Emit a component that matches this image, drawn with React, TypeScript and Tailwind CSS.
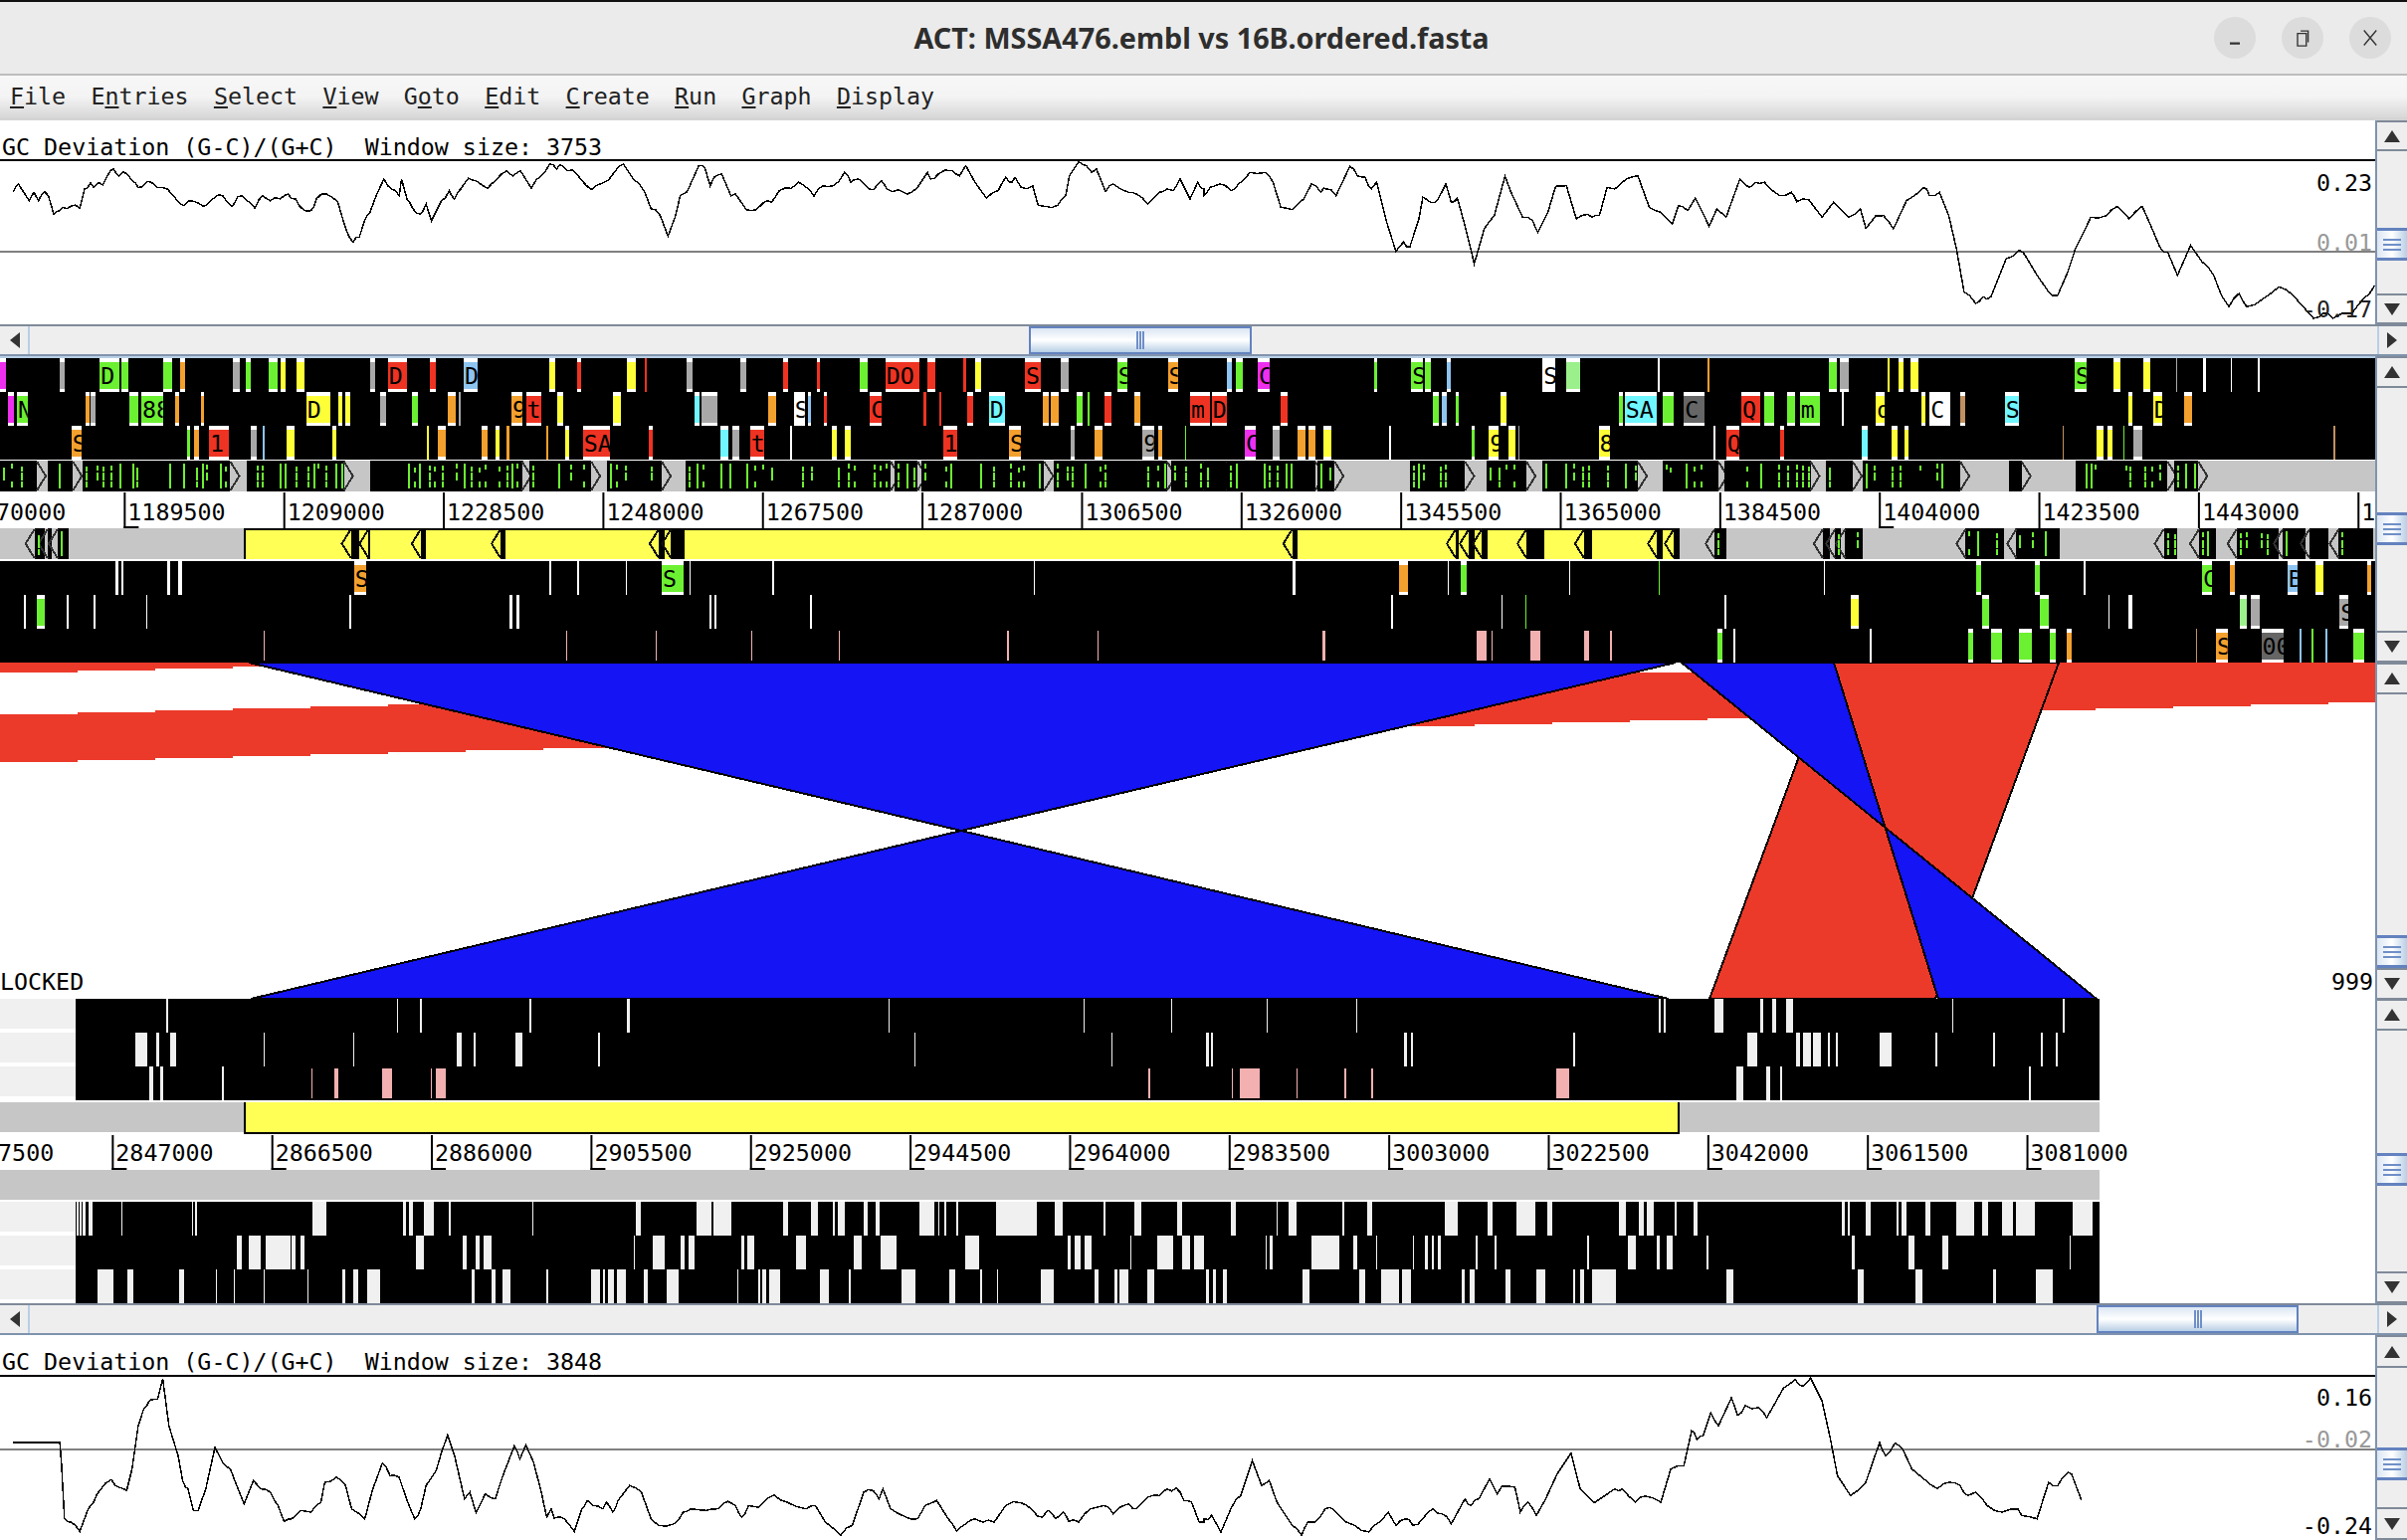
import { FC } from "react";

const COLORS: Record<string, string> = {
  m: "#ee2fee",
  w: "#ffffff",
  g: "#6cf032",
  l: "#9cf08c",
  o: "#f2a02e",
  y: "#ffff38",
  r: "#ee3322",
  b: "#8ec4f0",
  c: "#70f6ff",
  a: "#a8a8a8",
  d: "#666666",
  t: "#c09060",
  p: "#f2b0b0",
  f: "#f0f0f0",
};

// spans are measured in the two half-width crops: x / 1.296, right half + 1210
type Span = { x: number; w: number; c: string; label?: string };

const parse = (s: string, off: number): Span[] =>
  s
    .trim()
    .split(/\s+/)
    .filter(Boolean)
    .map((tok) => {
      const [range, label] = tok.split(":");
      const c = range.slice(-1);
      const [a, b] = range.slice(0, -1).split("-").map(Number);
      return { x: off + a / 1.296, w: Math.max((b - a) / 1.296, 1.5), c, label };
    });

const spans = (left: string, right: string) => [...parse(left, 0), ...parse(right, 1210)];

const top1 = spans(
  "0-8m 78-84a 130-155g:D 158-167g 212-224g 235-241o 303-312a 320-326g 350-362g 365-372y 386-397y 482-488a 505-530r:D 560-568r 604-622b:D 715-723y 752-757r 816-828y 840-843r 894-902a 964-972a 1020-1026r 1064-1068r 1120-1130g 1153-1198r:DO 1208-1218r 1255-1258r 1270-1278y 1335-1355r:S 1381-1392a 1455-1468g:S 1521-1534o:S",
  "30-36b 42-50g 70-85m:C 222-226g 270-285g:S 288-296g 316-322b 441-458w:S 472-490l 591-594w 656-659o 814-824g 828-840a 890-893y 905-911y 920-931y 1134-1149g:S 1185-1193y 1224-1232y 1266-1268a 1301-1305w 1337-1339w 1372-1375w",
);
const top2 = spans(
  "10-18m 22-36g:N 112-116o 118-124a 168-180g 184-212g:88 228-233o 262-266o 399-430y:D 440-446y 450-456y 495-503a 536-544g 583-594o 597-600a 666-680o:9 685-705r:t 726-733y 798-809y 905-911c 914-934a 1000-1011o 1034-1048w:S 1052-1056b 1073-1077r 1133-1148r:C 1203-1206r 1223-1226r 1260-1267r 1288-1309c:D 1358-1366o 1369-1379o 1402-1410g 1416-1419g 1438-1448r 1477-1485o 1550-1568r:m",
  "0-8r 10-30r:D 100-109r 298-306g 310-316b 328-332g 386-394y 540-545g 548-590c:SA 598-612g 625-652d:C 700-724r:Q 730-742g 760-770g 776-802g:m 831-833w 875-887y:d 935-940y 945-972w:C 985-991t 1043-1061c:S 1204-1209y 1236-1248y:D 1276-1287o",
);
const top3 = spans(
  "93-106o:S 244-248g 253-259o 272-298r:1 327-335a 342-345b 373-384y 433-438y 556-558y 570-581o 627-635o 645-650y 660-663o 711-714o 736-741y 759-795r:SA 845-850r 938-949c 954-963a 977-995r:t 1029-1031w 1083-1090y 1100-1108y 1228-1247r:1 1314-1330o:S 1395-1400a 1425-1436o 1488-1503a:9 1508-1514o 1543-1545g",
  "53-68m:C 90-99a 122-132o 136-145o 155-166y 241-243w 348-353g 371-384y:9 397-405y 409-411a 514-529y:8 664-666w 680-697r:Q 750-755r 857-865c 895-903y 912-917y 1118-1120t 1162-1172y 1177-1183y 1197-1199g 1211-1222a 1471-1473t",
);
const low1 = spans(
  "150-154w 158-161w 218-222w 232-237w 461-477o:S 716-718w 752-754w 815-817w 862-890g:S 898-899w 1006-1008w 1346-1348w",
  "115-119w 254-266o 317-319w 334-342g 475-477w 592-594g 807-809w 1006-1012g 1082-1089g 1146-1148w 1300-1313g:C 1336-1343o 1411-1424b:B 1448-1458y 1515-1520o",
);
const low2 = spans(
  "31-34w 48-58g 87-89w 122-124w 190-192w 455-457w 664-667w 672-676w 924-927w 930-933w 1055-1057w",
  "244-246w 387-389w 418-420g 678-680w 843-853y 1014-1022g 1089-1100g 1178-1180w 1204-1209w 1349-1358l 1364-1375a 1479-1491a:S",
);
const low3 = spans(
  "343-345p 737-739p 854-856p 978-980p 1092-1094p 1312-1314p 1429-1431p",
  "154-158p 355-368p 374-376p 425-438p 495-501p 529-532p 669-675g 690-692w 867-869w 995-1002g 1025-1040g 1062-1078g 1102-1110g 1123-1130o 1292-1294t 1318-1333o:S 1377-1406d:00 1427-1430b 1442-1445g 1460-1463b 1497-1511g",
);

const bot1 = spans(
  "216-219f 517-518f 547-548f 690-691f 817-821f 1157-1158f 1411-1412f 1525-1526f",
  "81-82f 198-199f 592-595f 599-601f 665-676f 725-728f 740-745f 758-767f 974-975f 1119-1120f",
);
const bot2 = spans(
  "176-192f 203-207f 222-230f 343-344f 460-461f 595-601f 617-618f 671-681f 779-782f 1191-1192f 1447-1448f",
  "3-6f 9-12f 260-264f 270-271f 481-482f 708-720f 771-776f 780-790f 793-804f 813-815f 823-826f 880-896f 953-954f 1028-1029f 1090-1092f 1109-1112f",
);
const bot3 = spans(
  "195-199f 209-212f 289-292f 405-407p 436-441p 498-511p 561-562p 568-581p 1496-1497p",
  "36-38p 47-73p 120-121p 183-184p 218-219p 459-475p 694-702f 732-738f 750-753f 1075-1076f",
);
const bot4 = spans(
  "100-102f 104-106f 108-111f 115-120f 158-160f 250-251f 254-256f 407-425f 525-529f 533-538f 552-565f 584-587f 693-694f 828-834f 907-926f 929-953f 1020-1026f 1056-1065f 1085-1087f 1091-1100f 1125-1130f 1140-1146f 1197-1217f 1222-1224f 1230-1233f 1246-1247f 1297-1305f 1305-1350f 1374-1384f 1437-1440f 1478-1486f 1533-1540f",
  "35-42f 94-96f 110-121f 180-183f 212-219f 314-331f 369-376f 407-431f 447-453f 540-549f 566-573f 577-586f 613-616f 638-643f 831-834f 838-841f 862-868f 902-904f 908-915f 940-946f 980-1003f 1014-1021f 1040-1054f 1058-1082f 1131-1157f",
);
const bot5 = spans(
  "308-315f 324-340f 346-378f 380-385f 392-396f 542-552f 603-608f 620-625f 630-640f 825-827f 850-866f 886-892f 897-905f 965-970f 973-982f 1037-1050f 1112-1122f 1147-1168f 1257-1275f 1390-1395f 1400-1408f 1412-1422f 1472-1474f 1507-1528f 1540-1550f 1555-1568f",
  "80-82f 86-90f 140-176f 195-200f 224-226f 272-274f 288-292f 297-300f 304-308f 354-356f 378-381f 499-502f 552-562f 590-594f 603-610f 655-656f 844-848f 918-925f 962-969f 1127-1128f",
);
const bot6 = spans(
  "127-148f 166-174f 233-240f 281-283f 304-306f 343-344f 400-402f 446-450f 460-467f 478-495f 614-618f 640-645f 654-665f 711-714f 770-782f 785-788f 792-800f 804-815f 838-844f 868-884f 960-961f 987-990f 993-998f 1002-1016f 1068-1079f 1105-1108f 1174-1192f 1237-1244f 1277-1279f 1298-1300f 1355-1372f 1426-1431f 1452-1455f 1458-1470f 1494-1503f",
  "3-7f 12-16f 25-30f 128-137f 202-210f 231-254f 258-270f 336-339f 346-352f 393-399f 433-444f 481-484f 490-495f 506-537f 681-690f 852-859f 927-936f 1028-1031f 1084-1105f",
);

// gray strips: black blocks holding green codon marks
const forwardBlocks = spans(
  "0-48d 62-95d 108-300d 322-448d 482-680d 690-770d 790-862d 893-1160d 1165-1195d 1200-1360d 1372-1520d 1525-1568d",
  "0-30d 30-145d 148-170d 268-340d 368-420d 441-565d 597-670d 678-790d 810-845d 858-985d 1048-1065d 1135-1255d 1264-1295d",
);
const reverseBlocks = spans(
  "45-58d 62-68d 75-90d",
  "665-680d 806-815d 822-830d 835-858d 992-1042d 1058-1115d 1250-1268d 1296-1318d 1345-1400d 1405-1435d 1440-1465d 1478-1523d",
);
const yellowBlocks = spans(
  "457-468d 480-482d 548-555d 652-658d 858-866d 874-892d",
  "115-122d 328-332d 345-352d 362-370d 420-443d 495-505d 590-598d 612-620d",
);

const topGraph = [
  [17,580],[24,555],[38,605],[44,580],[50,605],[58,578],[63,590],[70,645],[78,635],[85,628],[92,622],[98,618],[104,628],[110,570],[118,552],[122,565],[128,550],[134,558],[140,530],[148,510],[155,530],[160,518],[172,545],[180,565],[188,555],[195,548],[205,565],[218,570],[226,590],[232,608],[240,620],[246,605],[258,612],[265,622],[272,612],[280,595],[290,590],[302,622],[310,592],[322,605],[332,628],[342,590],[352,605],[365,600],[375,585],[385,600],[395,632],[405,635],[412,600],[425,585],[440,608],[445,650],[452,700],[460,730],[468,715],[475,665],[482,640],[490,590],[500,540],[510,570],[520,590],[523,540],[530,600],[538,630],[548,645],[555,615],[562,665],[575,605],[585,575],[592,600],[600,570],[610,538],[620,545],[635,568],[645,545],[660,515],[668,530],[678,515],[692,568],[705,530],[716,495],[725,510],[733,500],[740,515],[746,512],[758,545],[770,572],[785,552],[800,520],[812,495],[825,540],[840,580],[848,630],[860,650],[870,712],[880,650],[886,590],[895,578],[910,500],[918,505],[925,560],[930,535],[940,525],[952,590],[958,585],[972,632],[985,632],[995,610],[1005,610],[1015,575],[1030,568],[1040,550],[1050,565],[1060,592],[1072,560],[1085,560],[1100,520],[1108,550],[1118,540],[1128,560],[1138,572],[1148,545],[1155,570],[1170,572],[1182,585],[1195,565],[1208,520],[1212,540],[1222,525],[1240,515],[1250,530],[1258,500],[1270,550],[1285,598],[1300,575],[1310,535],[1315,550],[1322,535],[1330,565],[1345,560],[1352,618],[1362,622],[1378,618],[1388,590],[1393,530],[1405,488],[1415,500],[1422,520],[1428,510],[1440,578],[1450,555],[1470,580],[1480,585],[1495,615],[1510,580],[1520,570],[1528,575],[1537,540],[1550,600],[1560,550],[1568,570],
];
const topGraphRight = [
  [0,590],[8,565],[20,555],[35,575],[45,555],[60,520],[80,520],[90,550],[100,625],[115,632],[130,600],[140,555],[152,580],[160,570],[172,590],[190,502],[200,530],[210,535],[218,570],[225,550],[238,670],[250,758],[260,730],[268,745],[280,660],[285,595],[295,610],[305,600],[315,555],[322,610],[330,598],[340,680],[352,795],[365,690],[378,650],[392,532],[400,580],[415,655],[428,665],[435,700],[448,640],[458,562],[472,560],[485,660],[495,648],[505,655],[515,650],[525,565],[535,570],[550,540],[565,530],[580,625],[595,640],[610,675],[618,620],[630,635],[640,597],[658,682],[668,630],[680,655],[698,540],[710,565],[718,550],[730,550],[750,590],[765,580],[772,608],[788,603],[805,655],[820,610],[840,655],[855,630],[862,688],[875,650],[885,650],[898,690],[915,605],[938,565],[945,590],[958,580],[970,650],[980,750],[990,880],[1005,915],[1015,895],[1025,895],[1045,780],[1062,755],[1072,780],[1085,830],[1100,880],[1112,890],[1125,820],[1135,750],[1150,680],[1155,655],[1175,650],[1190,622],[1205,660],[1222,622],[1235,690],[1245,745],[1255,760],[1268,830],[1285,740],[1300,790],[1315,830],[1325,890],[1335,925],[1348,885],[1358,925],[1380,900],[1400,865],[1420,895],[1445,960],[1458,945],[1470,960],[1495,945],[1510,900],[1525,860],
];
const bottomGraph = [
  [78,452],[80,510],[84,680],[92,690],[104,718],[115,650],[122,630],[130,595],[145,562],[155,585],[165,595],[172,530],[180,400],[187,350],[195,322],[205,320],[212,258],[220,400],[232,490],[238,565],[245,590],[252,655],[258,655],[268,590],[280,465],[290,510],[300,530],[310,590],[318,635],[330,565],[340,590],[352,600],[362,640],[370,688],[380,680],[392,655],[405,660],[418,630],[423,570],[438,555],[450,580],[458,650],[468,665],[475,682],[485,595],[498,512],[508,550],[520,555],[530,625],[540,680],[548,650],[555,580],[568,535],[575,480],[583,428],[592,490],[605,620],[612,600],[620,662],[632,605],[645,620],[655,550],[670,460],[677,500],[685,458],[695,510],[705,600],[712,675],[718,650],[722,678],[735,680],[748,718],[758,650],[765,625],[772,640],[785,650],[790,630],[798,660],[805,625],[820,580],[835,598],[848,680],[858,700],[878,695],[890,660],[900,650],[920,655],[935,650],[948,628],[958,640],[966,675],[975,640],[988,645],[1008,608],[1025,630],[1050,650],[1062,640],[1075,690],[1095,730],[1110,700],[1125,600],[1137,595],[1145,620],[1150,590],[1160,650],[1180,675],[1195,680],[1205,640],[1220,625],[1235,680],[1246,718],[1258,695],[1270,680],[1280,690],[1295,690],[1310,640],[1330,632],[1345,655],[1358,675],[1365,655],[1375,680],[1385,660],[1392,688],[1405,690],[1420,650],[1438,640],[1450,665],[1470,635],[1480,650],[1495,615],[1510,610],[1520,590],[1532,588],[1542,625],[1552,630],[1562,690],[1568,690],
];
const bottomGraphRight = [
  [0,680],[10,670],[22,720],[35,650],[48,610],[63,505],[75,580],[85,565],[95,630],[115,700],[127,730],[135,690],[145,690],[158,650],[168,650],[185,690],[205,715],[215,720],[222,700],[240,660],[250,700],[262,680],[272,700],[285,680],[298,650],[310,665],[322,695],[340,620],[348,640],[358,620],[372,560],[382,605],[388,582],[405,585],[412,660],[422,630],[433,670],[445,620],[460,545],[478,482],[490,590],[508,632],[535,590],[545,590],[562,630],[575,612],[595,630],[608,530],[625,520],[635,415],[642,440],[650,430],[660,360],[670,400],[687,315],[695,368],[705,338],[722,345],[733,375],[755,285],[770,260],[780,280],[790,255],[805,325],[815,430],[825,550],[842,610],[862,570],[880,450],[888,490],[900,452],[910,470],[922,530],[948,580],[955,590],[970,570],[985,580],[995,610],[1005,600],[1020,640],[1040,660],[1060,650],[1065,670],[1085,680],[1100,570],[1112,580],[1125,540],[1130,545],[1143,625],
];

const random = (seed: number) => () => {
  seed = (seed * 1664525 + 1013904223) % 4294967296;
  return seed / 4294967296;
};

// the traced points are coarse, so wobble a midpoint into every longer segment
const toLine = (left: number[][], right: number[][], y0: number) => {
  const rnd = random(y0 + 11);
  const pts = [
    ...left.map(([x, y]) => [x / 1.296, y0 + y / 3]),
    ...right.map(([x, y]) => [1210 + x / 1.296, y0 + y / 3]),
  ];
  const out: string[] = [];
  pts.forEach(([x, y], i) => {
    const prev = pts[i - 1];
    if (prev && x - prev[0] > 5 && Math.abs(y - prev[1]) < 14) {
      out.push(`${((x + prev[0]) / 2).toFixed(1)},${((y + prev[1]) / 2 + (rnd() - 0.5) * 5).toFixed(1)}`);
    }
    out.push(`${x.toFixed(1)},${y.toFixed(1)}`);
  });
  return out.join(" ");
};

const Codons: FC<{ blocks: Span[]; seed: number; h: number }> = ({ blocks, seed, h }) => {
  const rnd = random(seed);
  const marks: { x: number; y: number; w: number; l: number }[] = [];
  blocks.forEach((b) => {
    for (let x = b.x + 3; x < b.x + b.w - 2; x += 4 + rnd() * 6) {
      const r = rnd();
      if (r < 0.16) marks.push({ x, y: 3, w: 2, l: h - 6 });
      else if (r < 0.55) {
        marks.push({ x, y: 3 + rnd() * 4, w: 2, l: 5 });
        if (rnd() > 0.3) marks.push({ x, y: h / 2 - 4, w: 2, l: 8 });
        if (rnd() > 0.3) marks.push({ x, y: h - 10, w: 2, l: 6 });
      }
    }
  });
  return (
    <>
      {marks.map((m, i) => (
        <rect key={i} x={m.x} y={m.y} width={m.w} height={m.l} fill="#6cf032" />
      ))}
    </>
  );
};

const ArrowBlocks: FC<{ blocks: Span[]; h: number; dir: "left" | "right"; line: string }> = ({
  blocks,
  h,
  dir,
  line,
}) => (
  <>
    {blocks.map((b, i) => {
      const edge = dir === "right" ? b.x + b.w : b.x;
      const s = dir === "right" ? 1 : -1;
      const tip = `${edge},1 ${edge + 9 * s},${h / 2} ${edge},${h - 1}`;
      return (
        <g key={i}>
          <rect x={b.x} y={0} width={b.w} height={h} fill="#000" />
          <polyline points={tip} fill="none" stroke={line} strokeWidth="2" />
        </g>
      );
    })}
  </>
);

const Row: FC<{ items: Span[]; caps?: boolean }> = ({ items, caps }) => (
  <svg viewBox="0 0 2387 34" className="block w-[2387px] h-[34px] bg-black" shapeRendering="crispEdges">
    {items.map((f, i) => {
      const capped = caps && f.c !== "p" && f.w > 3;
      return (
        <g key={i}>
          {capped && <rect x={f.x} y={0} width={f.w} height={34} fill="#fff" />}
          <rect
            x={f.x}
            y={f.c === "p" ? 2 : capped ? 3.5 : 0}
            width={f.w}
            height={f.c === "p" ? 30 : capped ? 27 : 34}
            fill={COLORS[f.c]}
          />
          {f.label && (
            <svg x={f.x} y={0} width={f.w} height={34}>
              <text x={1} y={26} fontSize={23.3} fill="#000" shapeRendering="auto">
                {f.label}
              </text>
            </svg>
          )}
        </g>
      );
    })}
  </svg>
);

const MarginRow: FC<{ items: Span[] }> = ({ items }) => (
  <div className="flex h-[34px]">
    <div className="w-[76px] bg-[#f0f0f0] border-b-4 border-white" />
    <svg viewBox="76 0 2034 34" className="block w-[2034px] h-[34px] bg-black" shapeRendering="crispEdges">
      {items.map((f, i) => (
        <rect key={i} x={f.x} y={f.c === "p" ? 2 : 0} width={f.w} height={f.c === "p" ? 30 : 34} fill={COLORS[f.c]} />
      ))}
    </svg>
  </div>
);

const Ruler: FC<{ first: number; start: number; count: number; h: number; base: number; feet: number[] }> = ({
  first,
  start,
  count,
  h,
  base,
  feet,
}) => (
  <svg viewBox={`0 0 2387 ${h}`} className="block w-[2387px]" style={{ height: h }}>
    {Array.from({ length: count }).map((_, i) => {
      const x = start + i * 160.35;
      return (
        <g key={i}>
          <rect x={x} y={1} width={2} height={h} fill="#000" />
          {feet.includes(i) && <rect x={x} y={h - 2} width={15} height={2} fill="#000" />}
          <text x={x + 4} y={base} fontSize={23.3} fill="#000">
            {first + i * 19500}
          </text>
        </g>
      );
    })}
  </svg>
);

const GraphPanel: FC<{
  y: number;
  h: number;
  title: string;
  titleY: number;
  topLine: number;
  midLine: number;
  line: string;
  extra?: React.ReactNode;
  values: [string, number, string][];
}> = ({ y, h, title, titleY, topLine, midLine, line, extra, values }) => (
  <svg viewBox={`0 ${y} 2387 ${h}`} className="block flex-1 h-full bg-white">
    <text x={2} y={titleY} fontSize={23.3} fill="#000" className="whitespace-pre">
      {title}
    </text>
    <rect x={0} y={topLine} width={2387} height={2} fill="#000" />
    <rect x={0} y={midLine} width={2387} height={2} fill="#808080" />
    {extra}
    <polyline points={line} fill="none" stroke="#000" strokeWidth="1.5" shapeRendering="crispEdges" />
    {values.map(([t, vy, c]) => (
      <text key={t} x={2384} y={vy} fontSize={23.3} fill={c} textAnchor="end">
        {t}
      </text>
    ))}
  </svg>
);

const stepBand = (topAt0: number, bottomAt0: number) => {
  const upper: string[] = [];
  const lower: string[] = [];
  for (let x = 0; x <= 2400; x += 78) {
    const d = Math.round(x * 0.0257);
    upper.push(`${x},${topAt0 - d} ${x + 78},${topAt0 - d}`);
    lower.unshift(`${x + 78},${bottomAt0 - d} ${x},${bottomAt0 - d}`);
  }
  return [...upper, ...lower].join(" ");
};

const Comparison: FC = () => (
  <svg viewBox="0 666 2387 338" className="block flex-1 h-full bg-white" shapeRendering="crispEdges">
    <polygon points={stepBand(718, 766)} fill="#ec3a2a" />
    <polygon points={stepBand(666, 676)} fill="#ec3a2a" />
    <polygon points="1843,666 2069,666 1945,1004 1718,1004" fill="#ec3a2a" stroke="#000" strokeWidth="2" />
    <polygon points="250,666 1684,666 966,835" fill="#1414f4" stroke="#000" strokeWidth="2" />
    <polygon points="252,1004 1677,1004 966,835" fill="#1414f4" stroke="#000" strokeWidth="2" />
    <polygon points="1690,666 1843,666 1948,1004 2107,1004" fill="#1414f4" stroke="#000" strokeWidth="2" />
    <text x={0} y={995} fontSize={23.3} fill="#000" shapeRendering="auto">
      LOCKED
    </text>
    <text x={2385} y={995} fontSize={23.3} fill="#000" textAnchor="end" shapeRendering="auto">
      999
    </text>
  </svg>
);

const Grip: FC<{ vertical?: boolean }> = ({ vertical }) =>
  vertical ? (
    <div className="flex flex-col gap-[3px]">
      <div className="w-[18px] h-[2px] bg-[#6f8fc8]" />
      <div className="w-[18px] h-[2px] bg-[#6f8fc8]" />
      <div className="w-[18px] h-[2px] bg-[#6f8fc8]" />
    </div>
  ) : (
    <div className="flex gap-[1px]">
      <div className="w-[2px] h-[18px] bg-[#6f8fc8]" />
      <div className="w-[2px] h-[18px] bg-[#6f8fc8]" />
      <div className="w-[2px] h-[18px] bg-[#6f8fc8]" />
    </div>
  );

const VScroll: FC<{ h: number; btn: number; before: number; thumb: number }> = ({ h, btn, before, thumb }) => (
  <div className="w-[32px] shrink-0 flex flex-col bg-[#eeeeee] border-l-2 border-[#7f93ad]" style={{ height: h }}>
    <div className="shrink-0 flex items-center justify-center border-y-2 border-[#7f8a99]" style={{ height: btn }}>
      <svg viewBox="0 0 18 14" className="w-[18px] h-[14px]">
        <polygon points="9,1 17,13 1,13" fill="#333" />
      </svg>
    </div>
    <div className="shrink-0" style={{ height: before }} />
    <div
      className="shrink-0 flex items-center justify-center border-y-[3px] border-[#6382bf] bg-linear-to-r from-[#dbe6f3] via-white to-[#b8cfe5]"
      style={{ height: thumb }}
    >
      <Grip vertical />
    </div>
    <div className="flex-1" />
    <div className="shrink-0 flex items-center justify-center border-y-2 border-[#7f8a99]" style={{ height: btn }}>
      <svg viewBox="0 0 18 14" className="w-[18px] h-[14px]">
        <polygon points="1,1 17,1 9,13" fill="#333" />
      </svg>
    </div>
  </div>
);

const HScroll: FC<{ before: number; thumb: number }> = ({ before, thumb }) => (
  <div className="h-[32px] flex bg-[#eeeeee] border-t-2 border-b-2 border-t-[#7f8a99] border-b-[#7f93ad]">
    <div className="w-[30px] shrink-0 flex items-center justify-center border-r-2 border-[#b8cfe5]">
      <svg viewBox="0 0 14 18" className="w-[14px] h-[18px]">
        <polygon points="13,1 13,17 3,9" fill="#333" />
      </svg>
    </div>
    <div className="shrink-0" style={{ width: before }} />
    <div
      className="shrink-0 flex items-center justify-center border-2 border-[#6382bf] bg-linear-to-b from-[#dbe6f3] via-white to-[#b8cfe5]"
      style={{ width: thumb }}
    >
      <Grip />
    </div>
    <div className="flex-1" />
    <div className="w-[30px] shrink-0 flex items-center justify-center border-l-2 border-[#b8cfe5]">
      <svg viewBox="0 0 14 18" className="w-[14px] h-[18px]">
        <polygon points="1,1 1,17 11,9" fill="#333" />
      </svg>
    </div>
  </div>
);

const WindowButton: FC<{ children: React.ReactNode }> = ({ children }) => (
  <div className="w-[42px] h-[42px] rounded-full bg-[#dcdcdc] flex items-center justify-center">
    <svg viewBox="0 0 16 16" className="w-[20px] h-[20px]" fill="none" stroke="#333" strokeWidth="1.1">
      {children}
    </svg>
  </div>
);

const MENU: [string, string, string][] = [
  ["", "F", "ile"],
  ["E", "n", "tries"],
  ["", "S", "elect"],
  ["", "V", "iew"],
  ["G", "o", "to"],
  ["", "E", "dit"],
  ["", "C", "reate"],
  ["", "R", "un"],
  ["", "G", "raph"],
  ["", "D", "isplay"],
];

const ForwardStrip: FC = () => (
  <svg viewBox="0 0 2387 31" className="block w-[2387px] h-[31px] bg-[#c6c6c6]" shapeRendering="crispEdges">
    <ArrowBlocks blocks={forwardBlocks} h={31} dir="right" line="#333" />
    <Codons blocks={forwardBlocks} seed={41} h={31} />
  </svg>
);

const ReverseStrip: FC = () => (
  <svg viewBox="0 0 2387 31" className="block w-[2387px] h-[31px] bg-[#c6c6c6]" shapeRendering="crispEdges">
    <rect x={247} y={0} width={1441} height={31} fill="#ffff55" />
    <rect x={245} y={-1} width={2} height={33} fill="#000" />
    <rect x={245} y={0} width={1443} height={2} fill="#000" />
    <rect x={1686} y={0} width={2} height={31} fill="#000" />
    <ArrowBlocks blocks={yellowBlocks} h={31} dir="left" line="#111" />
    <ArrowBlocks blocks={reverseBlocks} h={31} dir="left" line="#333" />
    <Codons blocks={reverseBlocks} seed={7} h={31} />
  </svg>
);

const App: FC = () => {
  return (
    <div className="w-[2419px] h-[1548px] flex flex-col overflow-hidden bg-white font-['DejaVu_Sans_Mono',monospace] text-[23.3px] text-black">
      {/* Title bar */}
      <div className="h-[76px] shrink-0 relative flex items-center justify-center bg-[#ebebeb] border-t-2 border-t-[#111] border-b-2 border-b-[#bdbdbd]">
        <span className="pr-[4px] font-['Noto_Sans',sans-serif] font-bold text-[28.8px] text-[#2e2e2e]">
          ACT: MSSA476.embl vs 16B.ordered.fasta
        </span>
        <div className="absolute right-[16px] top-[15px] flex gap-[26px]">
          <WindowButton>
            <path d="M4 12.5h8" strokeWidth="1.8" />
          </WindowButton>
          <WindowButton>
            <path d="M4 4.5h7v10h-7z M6.5 2.5h6v9" />
          </WindowButton>
          <WindowButton>
            <path d="M3 2l10 12M13 2l-10 12" />
          </WindowButton>
        </div>
      </div>

      {/* Menu bar */}
      <div className="h-[45px] shrink-0 flex items-center gap-[25.3px] pl-[10px] bg-linear-to-b from-[#f7f7f7] via-[#f4f4f4] to-[#d8d8d8] border-b-[3px] border-[#d4d4d4] text-[#222]">
        {MENU.map(([pre, key, rest]) => (
          <span key={pre + key + rest}>
            {pre}
            <span className="underline underline-offset-2">{key}</span>
            {rest}
          </span>
        ))}
      </div>

      {/* Upper graph */}
      <div className="h-[205px] shrink-0 flex">
        <GraphPanel
          y={121}
          h={205}
          title="GC Deviation (G-C)/(G+C)  Window size: 3753"
          titleY={156}
          topLine={160}
          midLine={252}
          line={toLine(topGraph, topGraphRight, 0)}
          values={[
            ["0.23", 192, "#000"],
            ["0.01", 252, "#999"],
            ["-0.17", 319, "#222"],
          ]}
        />
        <VScroll h={205} btn={31} before={77} thumb={33} />
      </div>

      <HScroll before={1004} thumb={224} />

      {/* Upper sequence tracks */}
      <div className="h-[308px] shrink-0 flex">
        <div className="w-[2387px] flex flex-col bg-white">
          <div className="h-[2px] shrink-0 bg-[#b8cfe5]" />
          <Row items={top1} caps />
          <Row items={top2} caps />
          <Row items={top3} caps />
          <div className="h-[1px] shrink-0 bg-white" />
          <ForwardStrip />
          <Ruler first={1170000} start={-36} count={16} h={37} base={29} feet={[1, 12]} />
          <ReverseStrip />
          <div className="h-[2px] shrink-0 bg-white" />
          <Row items={low1} caps />
          <Row items={low2} caps />
          <Row items={low3} caps />
        </div>
        <VScroll h={308} btn={32} before={125} thumb={33} />
      </div>

      {/* Comparison */}
      <div className="h-[338px] shrink-0 flex">
        <Comparison />
        <VScroll h={338} btn={32} before={242} thumb={33} />
      </div>

      {/* Lower sequence tracks */}
      <div className="h-[306px] shrink-0 flex">
        <div className="w-[2387px] flex flex-col bg-white">
          <MarginRow items={bot1} />
          <MarginRow items={bot2} />
          <MarginRow items={bot3} />
          <div className="h-[2px] shrink-0 bg-white" />
          <div className="h-[32px] shrink-0 flex items-start">
            <div className="w-[245px] h-[30px] bg-[#c6c6c6]" />
            <div className="w-[1443px] h-[32px] bg-[#ffff55] border-x-2 border-b-2 border-black" />
            <div className="w-[422px] h-[30px] bg-[#c6c6c6]" />
          </div>
          <Ruler first={2827500} start={-48} count={14} h={36} base={27} feet={[0, 1, 2, 3, 4, 5, 6, 7, 8, 9, 10, 11, 12, 13]} />
          <div className="w-[2110px] h-[30px] shrink-0 bg-[#c6c6c6]" />
          <div className="h-[2px] shrink-0 bg-white" />
          <MarginRow items={bot4} />
          <MarginRow items={bot5} />
          <MarginRow items={bot6} />
        </div>
        <VScroll h={306} btn={32} before={123} thumb={33} />
      </div>

      <HScroll before={2077} thumb={203} />

      {/* Lower graph */}
      <div className="h-[206px] shrink-0 flex">
        <GraphPanel
          y={1342}
          h={206}
          title="GC Deviation (G-C)/(G+C)  Window size: 3848"
          titleY={1377}
          topLine={1382}
          midLine={1456}
          line={toLine(bottomGraph, bottomGraphRight, 1300)}
          extra={<rect x={13} y={1449} width={48} height={2} fill="#000" />}
          values={[
            ["0.16", 1413, "#000"],
            ["-0.02", 1455, "#999"],
            ["-0.24", 1542, "#000"],
          ]}
        />
        <VScroll h={206} btn={33} before={80} thumb={33} />
      </div>
    </div>
  );
};

export default App;
